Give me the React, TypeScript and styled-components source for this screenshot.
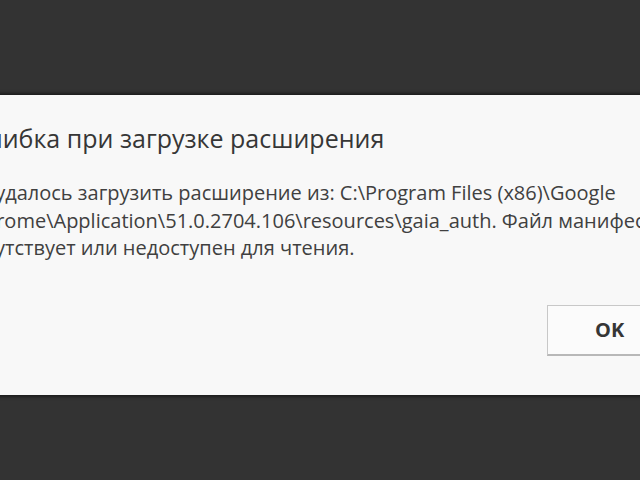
import React from "react";
import styled, { createGlobalStyle } from "styled-components";

const GlobalStyle = createGlobalStyle`
	html, body {
		margin: 0;
		padding: 0;
		background: #333333;
		overflow: hidden;
	}
`;

const Page = styled.div`
	width: 640px;
	height: 480px;
	overflow: hidden;
	display: flex;
	flex-direction: column;
	padding-top: 95px;
	box-sizing: border-box;
	background: #333333;
	font-family: "Open Sans", "Noto Sans", sans-serif;
`;

const Dialog = styled.div`
	margin-left: -61px;
	width: 820px;
	height: 300px;
	flex-shrink: 0;
	box-sizing: border-box;
	background: #f8f8f8;
	box-shadow: 0 0 3px 2px rgba(0, 0, 0, 0.45);
	padding: 28px 0 0 25px;
	display: flex;
	flex-direction: column;
`;

const Title = styled.div`
	font-size: 25px;
	line-height: 30px;
	margin-left: -3px;
	color: #363636;
	white-space: nowrap;
`;

const Message = styled.div`
	margin-top: 26px;
	font-size: 20px;
	line-height: 27.5px;
	color: #404040;
	white-space: pre;
`;

const Buttons = styled.div`
	display: flex;
	justify-content: flex-start;
	margin-top: 43px;
	padding-left: 583px;
`;

const Button = styled.button`
	width: 140px;
	height: 51px;
	box-sizing: border-box;
	border: 1px solid #c8c8c8;
	border-bottom: 2px solid #b8b8b8;
	background: #fbfbfb;
	font-family: "Open Sans", "Noto Sans", sans-serif;
	font-weight: 700;
	font-size: 20px;
	color: #363636;
	text-align: left;
	padding-left: 47px;
`;

export default function App() {
	return (
		<>
			<GlobalStyle />
			<Page>
				<Dialog>
					<Title>Ошибка при загрузке расширения</Title>
					<Message>
						{"Не удалось загрузить расширение из: C:\\Program Files (x86)\\Google\n" +
							"\\Chrome\\Application\\51.0.2704.106\\resources\\gaia_auth. Файл манифеста\n" +
							"отсутствует или недоступен для чтения."}
					</Message>
					<Buttons>
						<Button>OK</Button>
					</Buttons>
				</Dialog>
			</Page>
		</>
	);
}
